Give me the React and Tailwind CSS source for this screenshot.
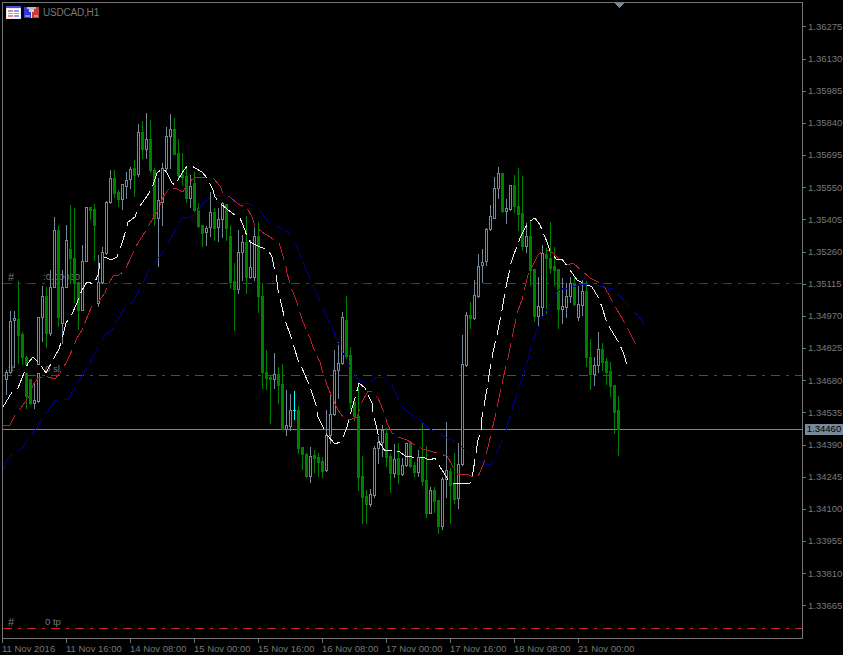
import React from "react";

// [x, hollow, high, bodyTop, bodyBottom, low]
const candles = [
  [6,1,370,372,379,394],[10,1,311,321,372,373],[14,1,311,318,320,367],[18,0,281,319,335,363],[22,0,332,334,357,364],
  [26,0,356,357,364,364],[26,0,373,373,396,408],[30,0,379,379,403,404],[34,1,383,400,403,408],[38,1,373,373,401,402],
  [38,1,317,317,364,364],[42,1,286,296,317,341],[46,0,287,296,333,347],[50,1,270,287,333,335],[54,1,217,230,287,287],
  [58,0,226,230,317,326],[62,1,270,287,323,343],[66,1,225,240,287,287],[70,0,205,249,258,283],[74,0,208,258,283,302],
  [78,0,282,282,310,329],[82,1,245,261,310,310],[86,1,207,207,261,261],[90,0,207,207,210,219],[94,0,204,209,225,260],
  [98,1,255,282,303,306],[102,1,247,252,282,283],[106,1,201,202,253,254],[110,1,170,178,202,203],[114,0,170,178,193,197],
  [118,0,190,192,199,206],[122,1,184,184,199,209],[126,1,172,180,186,198],[130,1,167,169,179,188],[134,0,160,168,175,196],
  [138,1,124,132,174,176],[142,0,121,132,149,158],[146,1,113,139,149,158],[150,0,120,139,170,172],[154,0,168,170,218,225],
  [158,1,178,200,218,266],[162,1,163,168,202,225],[166,1,127,136,168,172],[170,1,114,129,136,168],[174,0,118,129,154,154],
  [178,0,139,153,175,177],[182,0,153,175,177,184],[186,0,167,176,198,202],[190,1,175,186,198,207],[194,0,172,183,210,211],
  [198,0,203,208,226,227],[202,0,225,225,233,246],[206,1,226,228,232,245],[210,1,192,212,227,236],[214,0,208,212,228,240],
  [218,1,208,219,227,241],[222,1,202,203,219,237],[226,0,204,204,228,240],[230,0,226,236,282,288],[234,0,263,281,289,330],
  [238,1,230,252,289,293],[242,1,235,242,252,280],[246,0,216,242,277,293],[250,1,240,267,277,278],[254,1,227,236,277,280],
  [258,0,222,236,296,312],[262,0,283,296,372,388],[266,0,350,372,378,389],[270,0,375,377,379,423],[274,1,353,374,379,388],
  [278,0,367,374,385,403],[282,0,364,384,429,429],[286,1,390,425,429,435],[290,1,394,410,426,430],[298,0,406,410,448,453],
  [302,0,447,447,454,469],[306,0,453,454,476,477],[310,1,447,456,476,482],[314,0,450,455,458,472],[318,0,453,457,462,476],
  [322,0,457,461,471,477],[326,1,410,435,470,471],[330,1,393,414,435,443],[334,1,350,370,414,415],[338,1,342,363,370,398],
  [342,1,312,317,363,364],[346,0,296,320,356,358],[350,0,347,355,402,408],[354,0,400,402,416,420],[358,0,387,416,477,490],
  [362,0,456,476,497,523],[366,0,490,496,504,523],[370,1,489,494,504,506],[374,1,446,448,495,497],[378,1,436,442,448,463],
  [382,1,425,430,442,456],[386,0,428,433,457,466],[390,0,453,456,473,492],[394,1,444,459,473,477],[398,0,443,458,474,483],
  [402,1,458,465,474,475],[406,1,443,443,465,466],[410,0,441,442,466,467],[414,0,462,465,472,476],[418,1,450,457,472,476],
  [422,0,422,457,481,485],[426,0,446,480,513,517],[430,1,487,490,513,513],[434,0,487,490,501,512],[438,0,500,500,526,533],
  [442,1,477,479,526,529],[446,1,422,470,479,497],[450,0,468,471,485,523],[454,0,453,483,499,503],[458,1,443,464,498,508],
  [462,1,335,364,464,465],[466,1,312,315,365,366],[470,0,302,315,318,328],[474,1,280,295,318,319],[478,1,254,266,296,297],
  [482,1,249,262,265,282],[486,1,228,229,261,265],[490,1,205,216,229,230],[494,1,177,188,218,218],[498,1,167,173,188,198],
  [502,0,173,173,211,212],[506,1,199,208,211,223],[510,1,185,185,209,210],[514,0,175,185,206,212],[518,0,168,206,214,230],
  [522,0,176,213,246,250],[526,1,223,236,246,252],[530,0,221,236,270,285],[534,0,269,269,316,321],[538,1,277,306,316,325],
  [542,1,245,253,307,315],[546,0,248,254,258,313],[550,0,222,258,268,273],[554,0,247,266,270,285],[558,0,269,269,309,328],
  [562,1,278,306,309,323],[566,1,283,296,307,317],[570,1,277,283,296,302],[574,0,277,283,304,305],[578,1,285,304,317,320],
  [582,1,280,291,305,315],[586,0,281,291,357,366],[590,0,339,357,374,389],[594,1,357,365,374,385],[598,1,332,349,365,372],
  [602,0,343,349,362,370],[606,0,358,361,372,384],[610,0,362,371,386,396],[614,0,385,385,412,433],[618,0,396,410,429,455],
];

const whiteLine = "3,407 12,392 18,388 24,373 28,363 33,357 39,363 46,373 54,358 59,349 63,335 66,323 72,314 77,303 82,290 87,282 94,284 98,275 100,263 105,257 111,260 117,257 123,240 125,233 128,222 135,217 138,209 149,193 153,185 157,173 163,168 167,173 172,183 175,185 182,173 187,166 192,166 195,168 202,172 207,178 213,190 215,197 220,203 228,210 235,215 240,218 245,230 247,237 250,242 260,247 268,250 272,257 274,267 276,273 278,290 285,320 291,337 298,360 302,368 310,387 317,408 318,417 327,435 335,444 340,442 344,435 347,427 352,408 355,398 359,383 365,388 372,403 373,413 377,429 380,443 385,451 395,450 400,452 405,456 412,457 422,457 430,460 435,458 440,467 444,473 450,483 457,483 470,483 473,472 478,440 481,432 482,417 488,383 489,375 493,352 497,335 502,310 505,292 511,263 513,257 520,238 525,228 530,221 535,218 540,225 547,242 550,251 557,260 562,259 570,270 577,280 583,283 592,287 598,297 602,307 606,320 610,328 619,343 623,352 628,368";
const redLine = "3,425 10,425 15,415 21,408 30,395 33,385 38,378 45,376 48,377 55,379 60,373 66,363 70,355 77,338 82,330 88,315 92,306 98,302 105,293 108,285 113,276 119,275 125,270 133,253 136,246 147,229 150,223 157,212 163,197 170,187 177,189 183,192 188,182 197,177 207,177 213,178 220,186 223,193 230,197 238,204 247,208 252,217 255,226 262,232 270,237 279,243 281,249 286,267 287,273 292,290 295,297 303,322 310,338 313,347 320,362 322,370 327,385 331,395 338,410 343,417 350,420 357,417 362,402 368,391 373,392 378,398 385,415 387,423 392,433 398,437 407,440 413,444 423,449 430,451 440,454 447,456 452,465 458,475 467,474 473,477 478,477 485,460 492,430 497,408 500,393 505,370 508,358 513,333 518,310 522,300 528,275 538,255 545,249 553,253 562,262 567,265 573,263 590,278 598,282 603,285 609,295 613,303 623,320 627,327 635,343 638,350";
const blueLine = "3,470 8,458 15,452 23,448 28,438 35,430 45,415 55,401 68,399 78,383 87,368 93,357 100,343 107,333 112,330 125,307 133,302 143,283 150,268 162,253 170,240 177,227 183,217 190,217 197,213 203,203 212,197 220,195 230,197 240,204 248,203 258,208 268,222 280,228 288,232 297,247 300,255 307,272 312,283 317,295 327,317 332,327 338,343 343,353 350,367 358,380 367,384 377,377 383,377 392,385 400,403 405,410 420,420 427,427 435,432 452,440 460,445 468,453 475,460 482,463 490,465 498,450 505,433 515,400 520,385 526,367 532,343 537,330 545,313 558,290 567,288 580,285 590,284 603,287 613,289 628,305 635,312 647,328";

const priceLabels = ["1.36275","1.36130","1.35985","1.35840","1.35695","1.35550","1.35405","1.35260","1.35115","1.34970","1.34825","1.34680","1.34535","1.34390","1.34245","1.34100","1.33955","1.33810","1.33665"];
const timeLabels = ["11 Nov 2016","11 Nov 16:00","14 Nov 08:00","15 Nov 00:00","15 Nov 16:00","16 Nov 08:00","17 Nov 00:00","17 Nov 16:00","18 Nov 08:00","21 Nov 00:00"];

const Candle = ({ c }) => {
    const [x, hollow, hi, top, bot, lo] = c;
    const color = hollow ? "#778899" : "#008000";
    return (
        <g fill={color}>
            <rect x={x} y={hi} width="1" height={lo - hi + 1} />
            <rect x={x - 1} y={top} width="3" height={bot - top + 1} />
            {hollow && bot - top > 1 ? <rect x={x} y={top + 1} width="1" height={bot - top - 1} fill="#000" /> : null}
        </g>
    );
};

const Chart = () => (
    <svg className="absolute inset-0 w-[799px] h-[635px]" viewBox="3 3 799 635" shapeRendering="crispEdges">
        <line x1="3" x2="802" y1="283.5" y2="283.5" stroke="#0a640a" strokeDasharray="9 6 3 6" />
        <line x1="3" x2="802" y1="375.5" y2="375.5" stroke="#a02828" strokeDasharray="9 6 3 6" />
        <line x1="3" x2="802" y1="628.5" y2="628.5" stroke="#c8202c" strokeDasharray="9 6 3 6" />
        <line x1="3" x2="802" y1="429.5" y2="429.5" stroke="#778899" />
        {candles.map((c, i) => <Candle key={i} c={c} />)}
        <rect x="294" y="391" width="1" height="29" fill="#00ffff" />
        <rect x="293" y="410" width="3" height="1" fill="#00ffff" />
        <polyline points={blueLine} fill="none" stroke="#00008f" strokeDasharray="18 6" />
        <polyline points={redLine} fill="none" stroke="#bc1e2c" strokeDasharray="18 6" />
        <polyline points={whiteLine} fill="none" stroke="#f0f0f0" strokeDasharray="18 6" />
        <polygon points="614,3 624,3 619,8" fill="#778899" />
    </svg>
);

const TemplateIcon = () => (
    <svg className="w-[15px] h-[13px]" viewBox="0 0 15 13" shapeRendering="crispEdges">
        <rect width="15" height="13" fill="#e8e8f0" />
        <rect x="0" y="0" width="15" height="2" fill="#3a50d8" />
        <rect x="1" y="3" width="13" height="9" fill="#fff" />
        <rect x="2" y="4" width="5" height="7" fill="#f08a78" />
        <rect x="8" y="4" width="5" height="7" fill="#8a9af0" />
        <rect x="2" y="6" width="11" height="1" fill="#fff" />
        <rect x="2" y="8" width="11" height="1" fill="#fff" />
    </svg>
);

const ProfileIcon = () => (
    <svg className="w-[15px] h-[11px] ml-[1px]" viewBox="0 0 15 11" shapeRendering="crispEdges">
        <rect width="7" height="11" fill="#2f38d8" />
        <rect x="8" width="7" height="11" fill="#c83a3a" />
        <rect x="1" y="8" width="5" height="2" fill="#8088e8" />
        <rect x="10" y="8" width="4" height="2" fill="#e88080" />
        <rect x="3" y="0" width="9" height="2" fill="#b8b8b8" />
        <rect x="5" y="2" width="5" height="3" fill="#d0d0d0" />
        <rect x="7" y="5" width="1" height="6" fill="#e8e8e8" />
    </svg>
);

const ChartText = ({ className, children }) => (
    <span className={`absolute text-[9.5px] leading-[12px] text-[#787878] ${className}`}>{children}</span>
);

const App = () => {
    return (
        <div className="w-[843px] h-[655px] bg-black overflow-hidden flex flex-col font-['Liberation_Sans',sans-serif]">
            <div className="flex pl-[2px] pt-[2px]">
                <div className="relative w-[801px] h-[637px] border border-[#747474]">
                    <div className="absolute left-[3px] top-[3px] flex items-center gap-[2px]">
                        <TemplateIcon />
                        <ProfileIcon />
                        <span className="ml-[2px] text-[10px] leading-[12px] tracking-[-0.2px] text-[#787878]">USDCAD,H1</span>
                    </div>
                    <ChartText className="left-[5px] top-[268px] text-[11px]">#</ChartText>
                    <ChartText className="left-[40px] top-[268px]">:0.00030</ChartText>
                    <ChartText className="left-[5px] top-[360px] text-[11px]">#</ChartText>
                    <ChartText className="left-[42px] top-[360px]">0 sl</ChartText>
                    <ChartText className="left-[5px] top-[613px] text-[11px]">#</ChartText>
                    <ChartText className="left-[42px] top-[613px]">0 tp</ChartText>
                    <Chart />
                </div>
                <div className="relative flex-1 flex flex-col pt-[8.9px]">
                    {priceLabels.map((p) => (
                        <div key={p} className="h-[32.17px] flex items-center shrink-0">
                            <div className="w-[3px] h-px bg-[#747474]" />
                            <span className="ml-[2px] text-[9.5px] text-[#787878]">{p}</span>
                        </div>
                    ))}
                    <div className="absolute left-[2px] top-[422px] w-[38px] h-[11px] bg-[#778899] flex items-center justify-center text-[9.5px] text-black">
                        1.34460
                    </div>
                </div>
            </div>
            <div className="flex pl-[2px]">
                {timeLabels.map((t) => (
                    <div key={t} className="w-[64px]">
                        <div className="w-px h-[4px] bg-[#747474]" />
                        <div className="text-[9.5px] leading-[12px] text-[#787878] whitespace-nowrap">{t}</div>
                    </div>
                ))}
            </div>
        </div>
    );
};

export default App;
